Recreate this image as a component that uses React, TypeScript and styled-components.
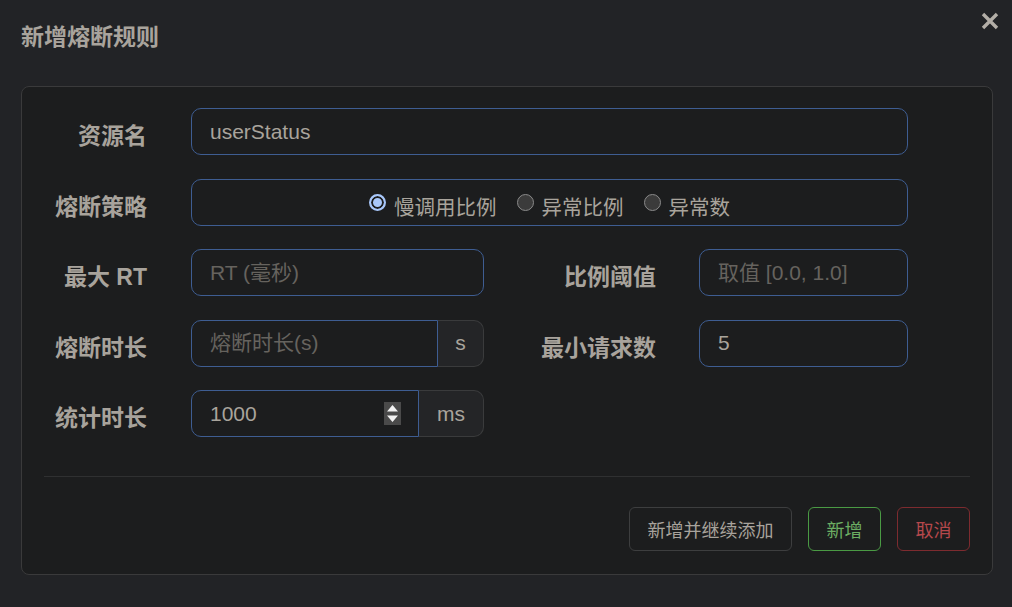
import React from "react";
import styled, { createGlobalStyle } from "styled-components";

const Global = createGlobalStyle`
  html, body { margin: 0; padding: 0; background: #222326; }
  body { font-family: "Liberation Sans", "Noto Sans CJK SC", sans-serif; }
  * { box-sizing: border-box; }
`;

const Dialog = styled.div`
  width: 1012px;
  height: 607px;
  padding: 0 19px 0 21px;
  background: #222326;
  display: flex;
  flex-direction: column;
`;

const Header = styled.div`
  height: 86px;
  display: flex;
  justify-content: space-between;
  align-items: flex-start;
`;

const Title = styled.h1`
  margin: 0;
  padding-top: 22px;
  font-size: 23px;
  line-height: 30px;
  font-weight: 700;
  color: #a9a49d;
`;

const CloseButton = styled.button`
  margin: 12px -6px 0 0;
  padding: 0;
  width: 18px;
  height: 18px;
  border: none;
  background: transparent;
  display: flex;
  cursor: pointer;
`;

const Card = styled.div`
  border: 1px solid #3a3a3b;
  border-radius: 8px;
  background: #1c1d1e;
  padding: 21px 22px 23px 22px;
`;

const Form = styled.div`
  display: flex;
  flex-direction: column;
  gap: 23.5px;
`;

const Row = styled.div`
  display: grid;
  grid-template-columns: 147px 293px 215px 209px;
  height: 47px;
`;

const Label = styled.label<{ $gap: number }>`
  display: flex;
  align-items: center;
  justify-content: flex-end;
  padding: 5px ${(p) => p.$gap}px 0 0;
  font-size: 23px;
  font-weight: 700;
  color: #a8a39c;
  white-space: nowrap;
`;

const Field = styled.div<{ $span?: number }>`
  grid-column: span ${(p) => p.$span ?? 1};
  display: flex;
  min-width: 0;
`;

const InputWrap = styled.div`
  flex: 1;
  min-width: 0;
  display: flex;
  position: relative;
`;

const TextInput = styled.input<{ $joined?: boolean }>`
  flex: 1;
  min-width: 0;
  width: 100%;
  height: 47px;
  border: 1px solid #3e5d92;
  border-radius: ${(p) => (p.$joined ? "10px 0 0 10px" : "10px")};
  background: #1c1d1e;
  padding: 0 18px;
  font-family: inherit;
  font-size: 21px;
  color: #a9a49c;
  outline: none;
  &::placeholder { color: #66635e; }
`;

const Addon = styled.span<{ $w: number }>`
  flex: none;
  width: ${(p) => p.$w}px;
  height: 47px;
  display: flex;
  align-items: center;
  justify-content: center;
  background: #242527;
  border: 1px solid #3a3b3c;
  border-left: none;
  border-radius: 0 10px 10px 0;
  font-size: 21px;
  color: #a9a49c;
`;

const Spinner = styled.span`
  position: absolute;
  right: 18px;
  top: 12px;
  width: 17px;
  height: 23px;
  background: #4a4a4a;
  display: flex;
  align-items: center;
  justify-content: center;
`;

const RadioBox = styled.div`
  grid-column: span 3;
  height: 47px;
  border: 1px solid #3e5d92;
  border-radius: 10px;
  display: flex;
  align-items: center;
  justify-content: center;
  gap: 20px;
  padding-top: 1px;
`;

const RadioItem = styled.label`
  display: flex;
  align-items: center;
  gap: 8px;
  font-size: 20.5px;
  color: #a9a49c;
  cursor: pointer;
`;

const RadioText = styled.span`
  padding-top: 6px;
`;

const Radio = styled.input`
  appearance: none;
  margin: 0;
  width: 17px;
  height: 17px;
  border-radius: 50%;
  border: 1.5px solid #8a8a8a;
  background: #3b3b3b;
  &:checked {
    border: 2px solid #a8c7fa;
    background: #a8c7fa;
    box-shadow: inset 0 0 0 2px #1c1d1e;
  }
`;

const Divider = styled.hr`
  margin: 38.5px 0 0 0;
  border: none;
  border-top: 1px solid #2f3031;
`;

const Footer = styled.div`
  display: flex;
  justify-content: flex-end;
  gap: 16px;
  margin-top: 30px;
`;

const tones = {
  neutral: { border: "#3d3e3f", color: "#a8a39c" },
  success: { border: "#4a9a44", color: "#6cae63" },
  danger: { border: "#7d2b2f", color: "#b5484c" },
};

const Button = styled.button<{ $tone: keyof typeof tones }>`
  height: 44px;
  padding: 0 17.5px;
  border-radius: 6px;
  background: transparent;
  border: 1px solid ${(p) => tones[p.$tone].border};
  color: ${(p) => tones[p.$tone].color};
  font-family: inherit;
  font-size: 18px;
  cursor: pointer;
`;

export default function App() {
  return (
    <>
      <Global />
      <Dialog>
        <Header>
          <Title>新增熔断规则</Title>
          <CloseButton aria-label="close">
            <svg width="18" height="18" viewBox="0 0 18 18">
              <path d="M2 2 L16 16 M16 2 L2 16" stroke="#b3aea7" strokeWidth="3.4" strokeLinecap="butt" />
            </svg>
          </CloseButton>
        </Header>
        <Card>
          <Form>
            <Row>
              <Label $gap={44}>资源名</Label>
              <Field $span={3}>
                <TextInput defaultValue="userStatus" />
              </Field>
            </Row>
            <Row>
              <Label $gap={44}>熔断策略</Label>
              <RadioBox>
                <RadioItem>
                  <Radio type="radio" name="grade" defaultChecked />
                  <RadioText>慢调用比例</RadioText>
                </RadioItem>
                <RadioItem>
                  <Radio type="radio" name="grade" />
                  <RadioText>异常比例</RadioText>
                </RadioItem>
                <RadioItem>
                  <Radio type="radio" name="grade" />
                  <RadioText>异常数</RadioText>
                </RadioItem>
              </RadioBox>
            </Row>
            <Row>
              <Label $gap={44}>最大 RT</Label>
              <Field>
                <TextInput placeholder="RT (毫秒)" />
              </Field>
              <Label $gap={43}>比例阈值</Label>
              <Field>
                <TextInput placeholder="取值 [0.0, 1.0]" />
              </Field>
            </Row>
            <Row>
              <Label $gap={44}>熔断时长</Label>
              <Field>
                <TextInput $joined placeholder="熔断时长(s)" />
                <Addon $w={46}>s</Addon>
              </Field>
              <Label $gap={43}>最小请求数</Label>
              <Field>
                <TextInput defaultValue="5" />
              </Field>
            </Row>
            <Row>
              <Label $gap={44}>统计时长</Label>
              <Field>
                <InputWrap>
                  <TextInput $joined defaultValue="1000" />
                  <Spinner>
                    <svg width="13" height="19" viewBox="0 0 13 19">
                      <path d="M6.5 1 L12 7.5 L1 7.5 Z M1 11.5 L12 11.5 L6.5 18 Z" fill="#f2f2f2" />
                    </svg>
                  </Spinner>
                </InputWrap>
                <Addon $w={65}>ms</Addon>
              </Field>
            </Row>
          </Form>
          <Divider />
          <Footer>
            <Button $tone="neutral">新增并继续添加</Button>
            <Button $tone="success">新增</Button>
            <Button $tone="danger">取消</Button>
          </Footer>
        </Card>
      </Dialog>
    </>
  );
}
